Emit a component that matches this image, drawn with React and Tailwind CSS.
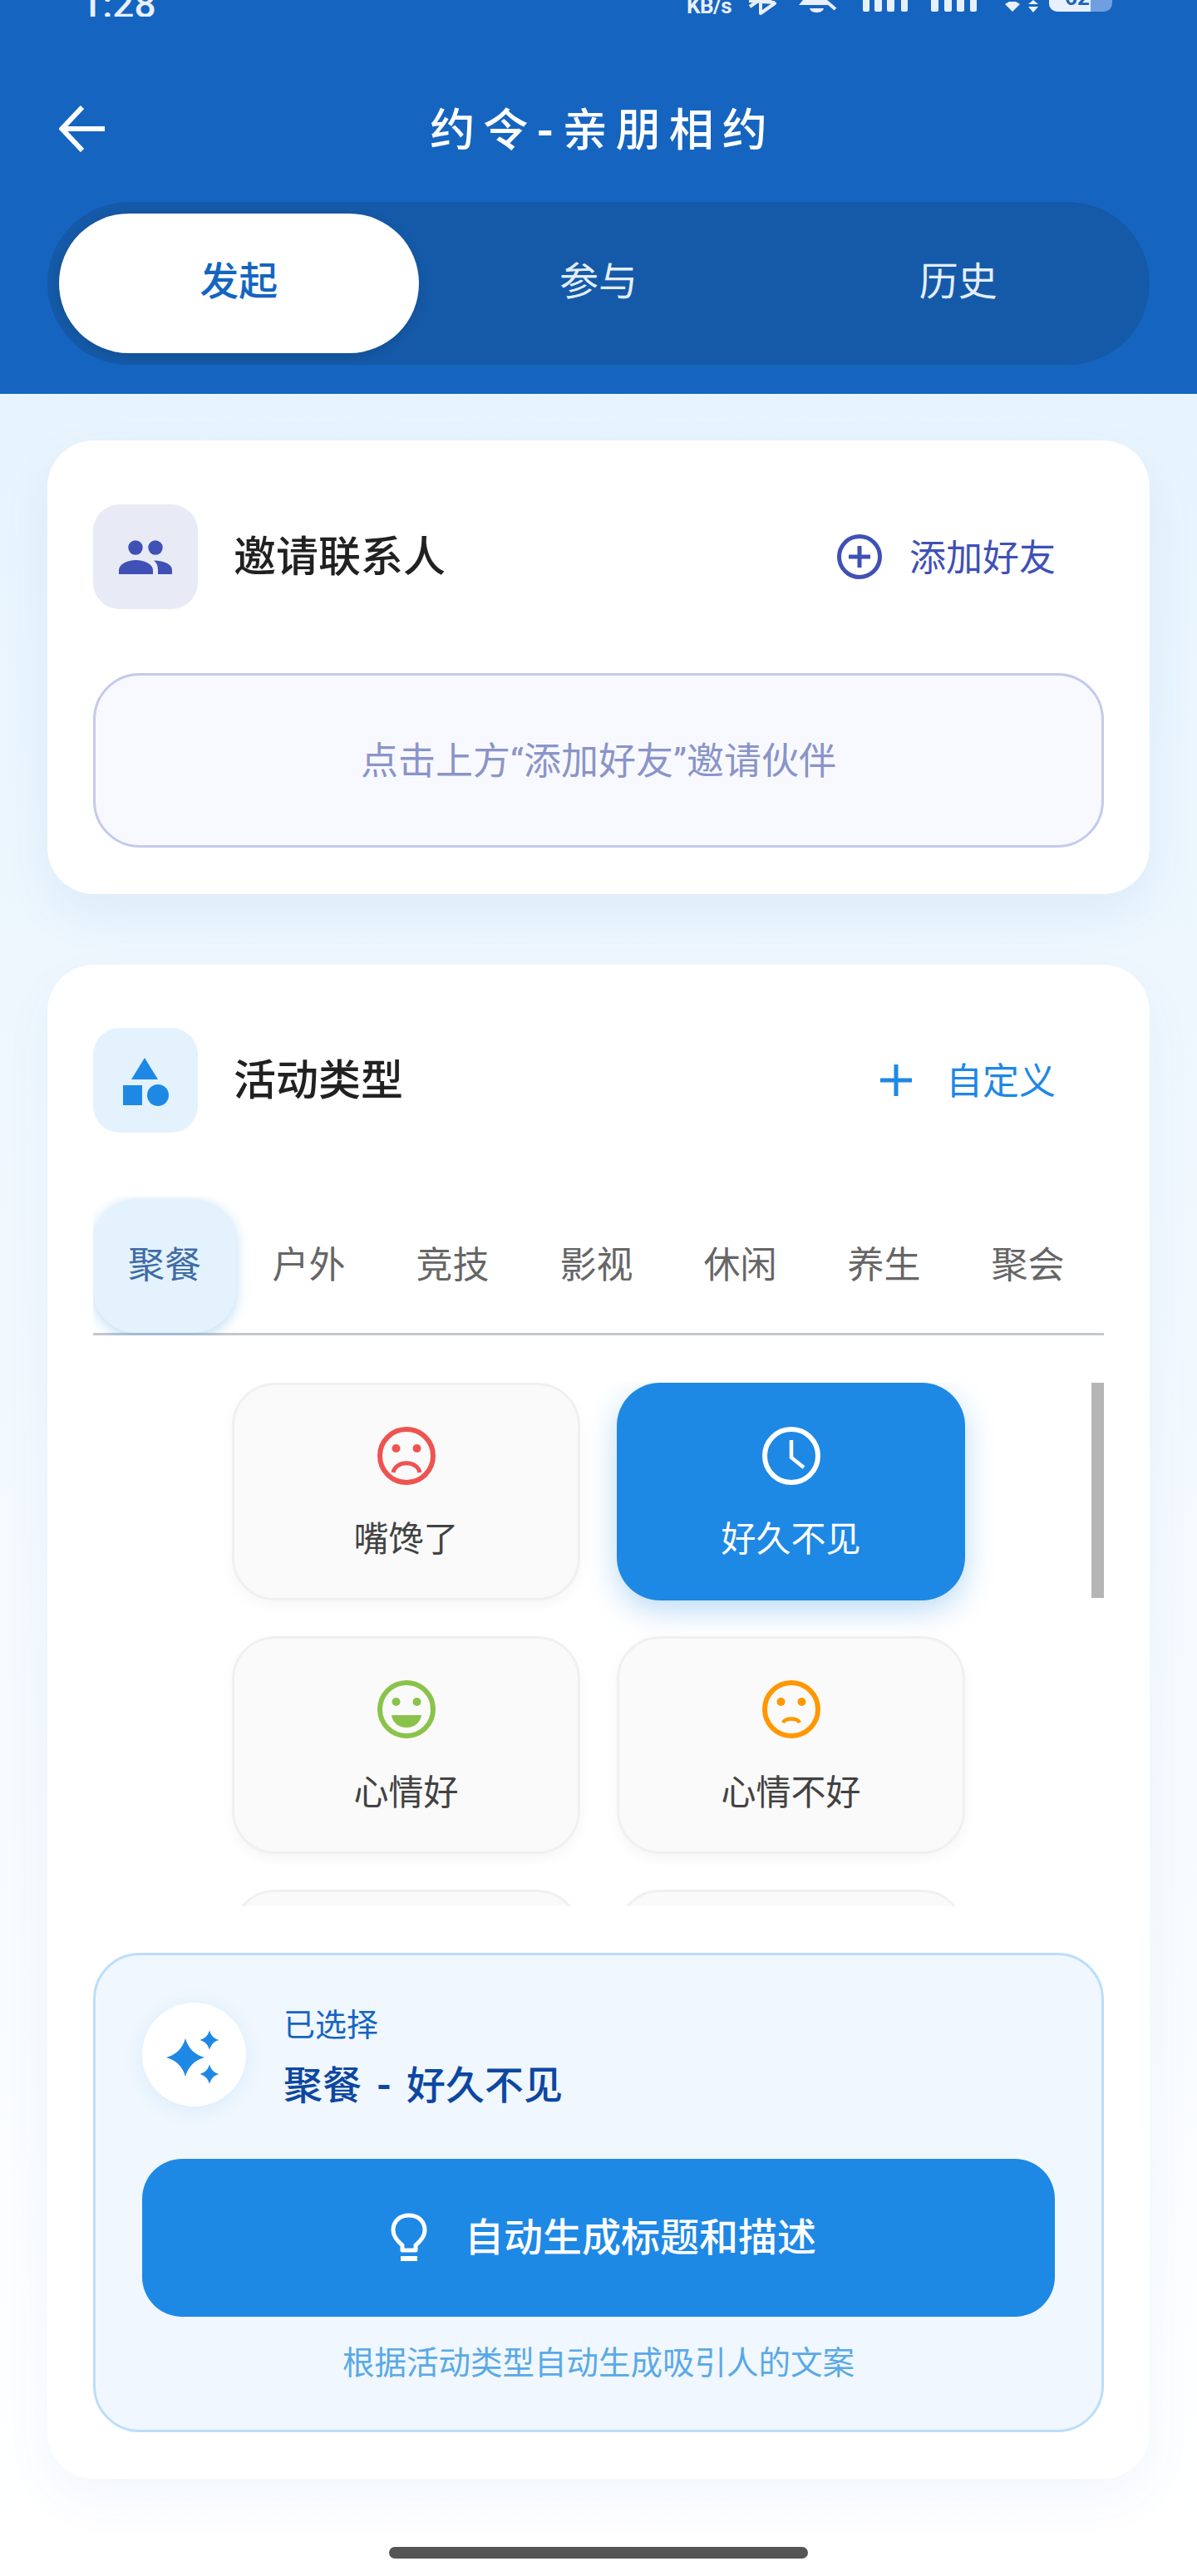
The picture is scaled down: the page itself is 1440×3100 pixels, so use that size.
import React from "react";

const StatusIcons = () => (
  <svg width="440" height="20" viewBox="900 0 440 20" className="block">
    <g fill="none" stroke="#e8f0fb" strokeWidth="4">
      <path d="M901 1 L932 3 M915 -4 V16 L932 4 L902 -8 M902 8 L915 -1" strokeLinejoin="round" />
    </g>
    <path d="M961 6 L966 0 H994 L999 6 Z" fill="#e8f0fb" />
    <path d="M974 10 H991 C990 14 986 15 982.5 15 C979 15 975 14 974 10Z" fill="#e8f0fb" />
    <path d="M985 -6 L1005 11" stroke="#e8f0fb" strokeWidth="4" />
    <g fill="#e8f0fb">
      <rect x="1038" y="-8" width="8" height="22" rx="2" />
      <rect x="1052" y="-8" width="9" height="22" rx="2" />
      <rect x="1067" y="-8" width="9" height="22" rx="2" />
      <rect x="1084" y="-8" width="8" height="22" rx="2" />
      <rect x="1120" y="-8" width="9" height="22" rx="2" />
      <rect x="1136" y="-8" width="9" height="22" rx="2" />
      <rect x="1151" y="-8" width="9" height="22" rx="2" />
      <rect x="1167" y="-8" width="8" height="22" rx="2" />
      <path d="M1209 5 L1214 2 H1222 L1227 5 L1218 14 Z" />
      <path d="M1243 0 L1249 5 H1237 Z M1237 8 H1249 L1243 15 Z" />
    </g>
    <rect x="1262" y="-16" width="76" height="30" rx="10" fill="#6f9fe0" />
    <path d="M1272 -16 H1312 V14 H1272 A10 10 0 0 1 1262 4 V-6 A10 10 0 0 1 1272 -16Z" fill="#e8f0fb" />
    <text x="1281" y="6" fontSize="26" fontWeight="700" fill="#1565c0" fontFamily="Roboto, sans-serif">62</text>
  </svg>
);

const BackArrow = () => (
  <svg width="56" height="56" viewBox="0 0 56 56" fill="none" stroke="#fff" strokeWidth="6">
    <path d="M55 28 H5" />
    <path d="M28 2 L3.5 28 L28 54" />
  </svg>
);

const People = () => (
  <svg width="64" height="41" viewBox="0 0 64 41" fill="#3f51b5">
    <circle cx="20" cy="9" r="8.7" />
    <circle cx="44" cy="9" r="8.7" />
    <path d="M0 41 V36 C0 29 10 24 20.5 24 C31 24 41 29 41 36 V41 Z" />
    <path d="M42 24.5 C55 25 64 29 64 36 V41 H47 V36 C47 31 45.5 27 42 24.5Z" />
  </svg>
);

const Shapes = () => (
  <svg width="60" height="60" viewBox="0 0 60 60" fill="#1e88e5">
    <path d="M27 1 L43 27 H11 Z" />
    <rect x="1" y="34" width="23" height="24" />
    <circle cx="43" cy="46" r="13" />
  </svg>
);

const Sparkles = () => (
  <svg width="70" height="70" viewBox="0 0 70 70" fill="#1e88e5">
    <path transform="translate(24 38)" d="M0 -23 Q5 -5 23 0 Q5 5 0 23 Q-5 5 -23 0 Q-5 -5 0 -23Z" />
    <path transform="translate(53 17)" d="M0 -11.5 Q2.5 -2.5 11.5 0 Q2.5 2.5 0 11.5 Q-2.5 2.5 -11.5 0 Q-2.5 -2.5 0 -11.5Z" />
    <path transform="translate(53 58)" d="M0 -11.5 Q2.5 -2.5 11.5 0 Q2.5 2.5 0 11.5 Q-2.5 2.5 -11.5 0 Q-2.5 -2.5 0 -11.5Z" />
  </svg>
);

const Bulb = () => (
  <svg width="44" height="60" viewBox="0 0 44 60" fill="none" stroke="#fff" strokeWidth="5">
    <path d="M14 45 V39 C7 33 3 27 3 21 C3 10 11 3 22 3 C33 3 41 10 41 21 C41 27 37 33 30 39 V45 Z" strokeLinejoin="round" />
    <path d="M12 55 H32" strokeWidth="6" />
  </svg>
);

const Face = ({ color, kind }) => (
  <svg width="72" height="72" viewBox="0 0 72 72" fill="none">
    <circle cx="36" cy="36" r="32" stroke={color} strokeWidth="6" />
    {kind === "clock" ? (
      <path d="M36 17 V38 L51 50" stroke={color} strokeWidth="4.5" />
    ) : (
      <>
        <circle cx="23.5" cy="27" r="5" fill={color} />
        <circle cx="48.5" cy="27" r="5" fill={color} />
      </>
    )}
    {kind === "sad" && <path d="M20 56 C23 41 49 41 52 56" stroke={color} strokeWidth="5" />}
    {kind === "happy" && <path d="M18 43 H54 C53 52 45 58 36 58 C27 58 19 52 18 43Z" fill={color} />}
    {kind === "meh" && <path d="M26 52 C29 46 43 46 46 52" stroke={color} strokeWidth="4.5" />}
  </svg>
);

const Option = ({ label, color, kind, active }) => (
  <div
    className={
      active
        ? "h-[262px] rounded-[52px] bg-[#1e88e5] shadow-[0_12px_36px_rgba(30,136,229,0.3)] flex flex-col items-center pt-[52px]"
        : "h-[262px] rounded-[52px] bg-[#fafafa] border-[3px] border-[#f0f0f0] shadow-[0_6px_16px_rgba(0,0,0,0.04)] flex flex-col items-center pt-[49px]"
    }
  >
    <Face color={color} kind={kind} />
    <div className={active ? "mt-[38px] text-[42px] leading-[54px] text-white" : "mt-[38px] text-[42px] leading-[54px] text-[#424242]"}>
      {label}
    </div>
  </div>
);

const tabs = ["聚餐", "户外", "竞技", "影视", "休闲", "养生", "聚会"];

export default function App() {
  return (
    <div className="w-[1440px] min-h-[3100px] bg-gradient-to-b from-[#e3f2fd] to-[#ffffff] font-['Roboto','Noto_Sans_CJK_SC',sans-serif] overflow-hidden">
      <header className="h-[474px] bg-[#1565c0]">
        <div className="h-[20px] overflow-hidden flex">
          <div className="ml-[97px] w-[102px] -mt-[19px] text-[46px] leading-[48px] font-medium text-[#e8f0fb]">1:28</div>
          <div className="ml-[627px] -mt-[5px] h-[24px] w-[60px] text-[26px] leading-[24px] font-bold text-[#e8f0fb] tracking-[-0.5px]">KB/s</div>
          <div className="ml-[14px]"><StatusIcons /></div>
        </div>
        <div className="mt-[80px] h-[110px] pl-[71px] grid grid-cols-[1fr_auto_1fr] items-center">
          <BackArrow />
          <h1 className="ml-[-61px] pt-[5px] text-[54px] leading-[70px] font-medium text-white tracking-[10px]">
            约令<span className="font-bold">-</span>亲朋相约
          </h1>
          <div />
        </div>
        <div className="mt-[33px] mx-[57px] h-[196px] rounded-full bg-[#155aa8] p-[14px] flex">
          <div className="w-[433px] pb-[4px] rounded-full bg-white shadow-[0_4px_14px_rgba(0,0,0,0.12)] flex items-center justify-center text-[47px] font-medium text-[#1565c0]">发起</div>
          <div className="w-[433px] pb-[4px] flex items-center justify-center text-[47px] text-[#e3eefa]">参与</div>
          <div className="w-[433px] pb-[4px] flex items-center justify-center text-[47px] text-[#e3eefa]">历史</div>
        </div>
      </header>

      <section className="mt-[56px] mx-[57px] rounded-[56px] bg-white shadow-[0_24px_60px_rgba(21,101,192,0.07)] px-[55px] pt-[77px] pb-[56px]">
        <div className="flex items-center h-[126px]">
          <div className="w-[126px] h-[126px] rounded-[32px] bg-[#e8eaf6] flex items-center justify-center"><People /></div>
          <div className="ml-[43px] pt-[2px] text-[51px] font-medium text-[#212121] flex-1">邀请联系人</div>
          <svg width="54" height="54" viewBox="0 0 54 54" fill="none" stroke="#3f51b5" strokeWidth="5">
            <circle cx="27" cy="27" r="24.5" />
            <path d="M27 14 V40 M14 27 H40" />
          </svg>
          <div className="ml-[33px] mr-[58px] pt-[4px] text-[44px] text-[#3f51b5]">添加好友</div>
        </div>
        <div className="mt-[77px] h-[210px] pt-[4px] rounded-[56px] border-[3px] border-[#c5cae9] bg-[#f8f9ff] flex items-center justify-center text-[45px] text-[#8a94c8]">
          点击上方“添加好友”邀请伙伴
        </div>
      </section>

      <section className="mt-[85px] mx-[57px] rounded-[56px] bg-white shadow-[0_24px_60px_rgba(21,101,192,0.05)] px-[55px] pt-[76px] pb-[56px]">
        <div className="flex items-center h-[126px]">
          <div className="w-[126px] h-[126px] pl-[4px] pt-[3px] rounded-[32px] bg-[#e3f2fd] flex items-center justify-center"><Shapes /></div>
          <div className="ml-[43px] pt-[3px] text-[51px] font-medium text-[#212121] flex-1">活动类型</div>
          <svg width="40" height="40" viewBox="0 0 40 40" fill="none" stroke="#1e88e5" strokeWidth="5">
            <path d="M20 1 V39 M1 20 H39" />
          </svg>
          <div className="ml-[40px] mr-[58px] pt-[3px] text-[44px] text-[#1e88e5]">自定义</div>
        </div>
        <div className="mt-[77px] pt-[3px] overflow-hidden">
          <div className="flex border-b-[3px] border-[#c4c7ce]">
            {tabs.map((t, i) => (
              <div
                key={t}
                className={
                  i === 0
                    ? "w-[172px] h-[161px] pb-[2px] mr-[1px] rounded-[52px] bg-[#e3f2fd] shadow-[0_4px_16px_rgba(30,136,229,0.3)] flex items-center justify-center text-[44px] text-[#3f6ca5]"
                    : "w-[173px] h-[161px] pb-[2px] flex items-center justify-center text-[44px] text-[#666666]"
                }
              >
                {t}
              </div>
            ))}
          </div>
        </div>
        <div className="relative mt-[57px] h-[630px] overflow-hidden">
          <div className="ml-[167px] w-[882px] grid grid-cols-2 gap-x-[44px] gap-y-[43px] pb-[20px]">
            <Option label="嘴馋了" color="#ef5350" kind="sad" />
            <Option label="好久不见" color="#ffffff" kind="clock" active />
            <Option label="心情好" color="#8bc34a" kind="happy" />
            <Option label="心情不好" color="#ff9800" kind="meh" />
            <div className="h-[262px] rounded-[52px] bg-[#fafafa] border-[3px] border-[#f0f0f0]" />
            <div className="h-[262px] rounded-[52px] bg-[#fafafa] border-[3px] border-[#f0f0f0]" />
          </div>
          <div className="absolute right-0 top-0 w-[15px] h-[259px] bg-[#b5b5b5]" />
        </div>
        <div className="mt-[56px] h-[577px] rounded-[56px] border-[3px] border-[#bbdefb] bg-[#f0f7fe] px-[56px] pt-[57px]">
          <div className="flex items-center h-[125px]">
            <div className="w-[125px] h-[125px] shrink-0 rounded-full bg-white shadow-[0_4px_24px_rgba(30,136,229,0.1)] flex items-center justify-center"><Sparkles /></div>
            <div className="ml-[45px] pt-[6px]">
              <div className="text-[38px] leading-[52px] text-[#1565c0]">已选择</div>
              <div className="mt-[16px] text-[47px] leading-[62px] font-medium text-[#0d47a1] [word-spacing:6px]">
                聚餐 <span className="font-bold">-</span> 好久不见
              </div>
            </div>
          </div>
          <div className="mt-[63px] h-[190px] pl-[12px] rounded-[48px] bg-[#1e88e5] flex items-center justify-center">
            <Bulb />
            <div className="ml-[45px] text-[47px] font-medium text-white">自动生成标题和描述</div>
          </div>
          <div className="mt-[30px] text-center text-[38.5px] leading-[52px] text-[#5aa9e6]">根据活动类型自动生成吸引人的文案</div>
        </div>
      </section>

      <div className="mt-[82px] mx-auto w-[504px] h-[14px] rounded-full bg-[#555555]" />
    </div>
  );
}
